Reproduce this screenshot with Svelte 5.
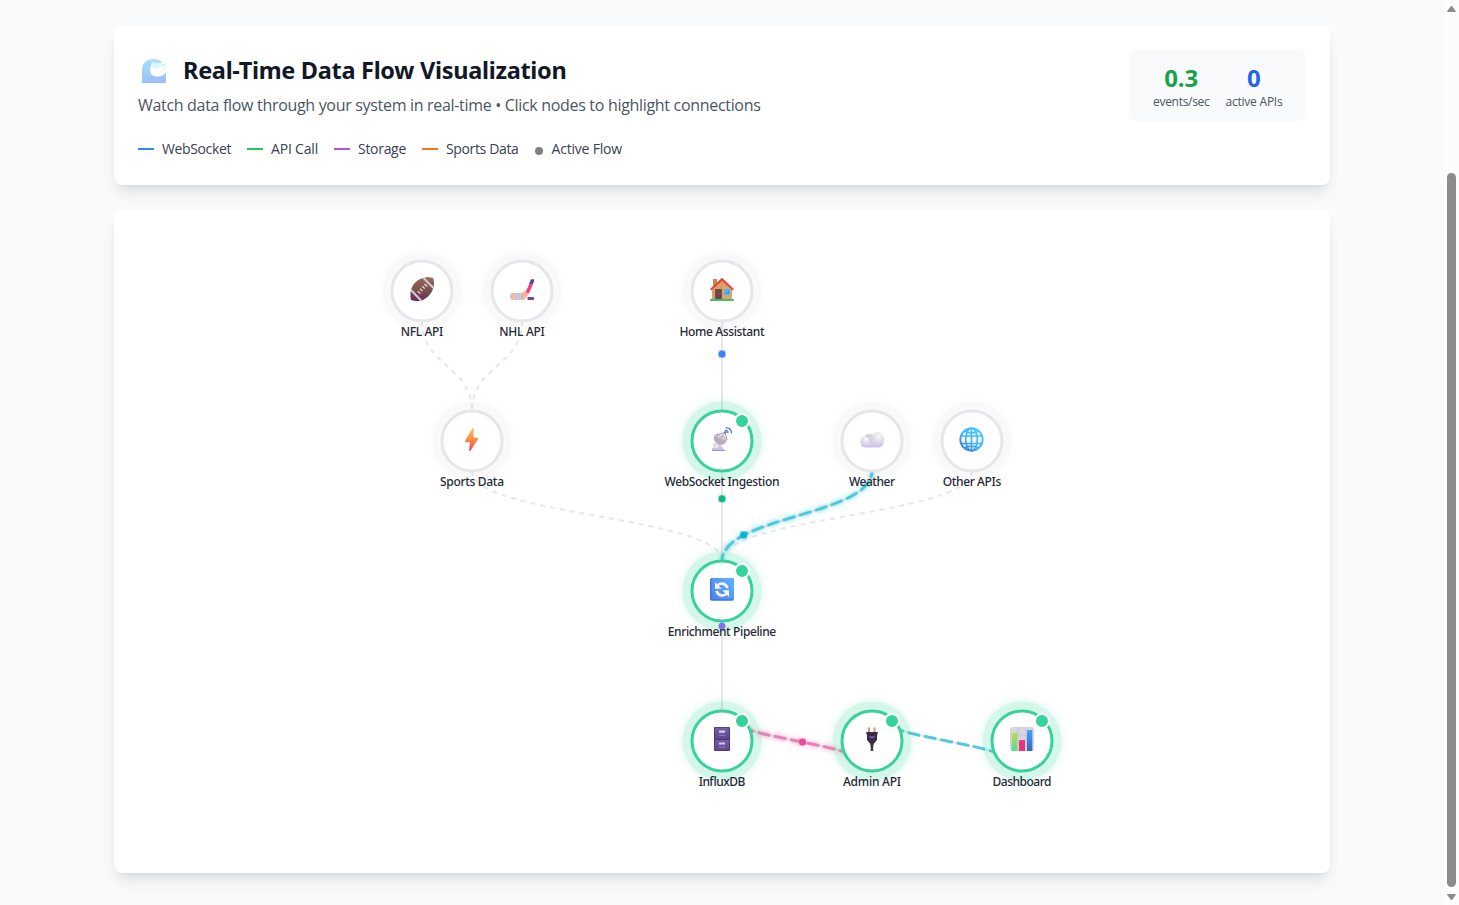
<script>
  const nodes = [
    { id: 'nfl', x: 422, y: 291, label: 'NFL API', w: 42.5 },
    { id: 'nhl', x: 522, y: 291, label: 'NHL API', w: 45.5 },
    { id: 'home', x: 722, y: 291, label: 'Home Assistant', w: 85 },
    { id: 'sports', x: 472, y: 441, label: 'Sports Data', w: 64 },
    { id: 'ws', x: 722, y: 441, label: 'WebSocket Ingestion', w: 115, active: true },
    { id: 'weather', x: 872, y: 441, label: 'Weather', w: 46 },
    { id: 'other', x: 972, y: 441, label: 'Other APIs', w: 58.5 },
    { id: 'enrich', x: 722, y: 591, label: 'Enrichment Pipeline', w: 108.5, active: true },
    { id: 'influx', x: 722, y: 741, label: 'InfluxDB', w: 46.5, active: true },
    { id: 'admin', x: 872, y: 741, label: 'Admin API', w: 58, active: true },
    { id: 'dash', x: 1022, y: 741, label: 'Dashboard', w: 59, active: true }
  ];

  const curve = (x1, y1, x2, y2) => {
    const m = (y1 + y2) / 2;
    return `M${x1} ${y1} C${x1} ${m} ${x2} ${m} ${x2} ${y2}`;
  };

  const edges = [
    { d: curve(722, 321, 722, 411) },
    { d: curve(722, 471, 722, 561) },
    { d: curve(722, 621, 722, 711) },
    { d: curve(422, 321, 472, 411), dashed: true },
    { d: curve(522, 321, 472, 411), dashed: true },
    { d: curve(472, 471, 722, 561), dashed: true },
    { d: curve(972, 471, 722, 561), dashed: true },
    { d: curve(872, 471, 722, 561), flow: '#06b6d4', glow: true },
    { d: curve(722, 711, 872, 771), flow: '#ec4899', glow: true },
    { d: curve(872, 711, 1022, 771), flow: '#06b6d4' }
  ];

  const particles = [
    { x: 722, y: 354, c: '#3b82f6' },
    { x: 722, y: 498.7, c: '#10b981' },
    { x: 743.6, y: 535, c: '#06b6d4' },
    { x: 802.5, y: 742, c: '#ec4899' }
  ];

  const legend = [
    { label: 'WebSocket', c: '#3b82f6', w: 69 },
    { label: 'API Call', c: '#22c55e', w: 47 },
    { label: 'Storage', c: '#a855f7', w: 48 },
    { label: 'Sports Data', c: '#f97316', w: 72.5 }
  ];

  // Tracks the text so that it fills the given width.
  function fit(el, width) {
    const spread = width - el.getBoundingClientRect().width;
    el.style.letterSpacing = spread / el.textContent.length + 'px';
  }
</script>

<div class="page">
  <main>
    <section class="card header">
      <div class="intro">
        <div class="title">
          <svg class="wave" width="24" height="24" viewBox="0 0 24 24">
            <defs>
              <linearGradient id="wv" x1="0" y1="0" x2="0" y2="1"><stop offset="0" stop-color="#4ec3f8" /><stop offset="1" stop-color="#3f7df0" /></linearGradient>
            </defs>
            <path d="M0 24V11C0 4 5 0 11 0c4 0 7 1 9 4l-5 1c-5-1-7 3-7 6 0 4.500 3.500 6.500 7 6.500 4 0 7-1.500 9-4V24z" fill="url(#wv)" />
            <path d="M9 5c1-3 4-2 5-1 2-1 4 0 4 1 2 0 2 2 1 3l-2 0-1 2-2-1-2 1-1-2c-1 0-2-1-2-3z" fill="#bdeafb" />
            <circle cx="21.500" cy="6" r="1.200" fill="#8bd8fa" /><circle cx="22.500" cy="10" r="1" fill="#bdeafb" />
          </svg>
          <h2><span use:fit={383.5}>Real-Time Data Flow Visualization</span></h2>
        </div>
        <p><span use:fit={622.5}>Watch data flow through your system in real-time • Click nodes to highlight connections</span></p>
        <div class="legend">
          {#each legend as l}
            <div class="key"><i style="background:{l.c}"></i><span use:fit={l.w}>{l.label}</span></div>
          {/each}
          <div class="key"><b></b><span use:fit={70.500}>Active Flow</span></div>
        </div>
      </div>
      <div class="stats">
        <div class="stat"><strong class="green"><span use:fit={34}>0.3</span></strong><small><span use:fit={56.5}>events/sec</span></small></div>
        <div class="stat"><strong class="blue"><span use:fit={14}>0</span></strong><small><span use:fit={57}>active APIs</span></small></div>
      </div>
    </section>

    <section class="card canvas">
      <svg width="1168" height="616" viewBox="138 233 1168 616">
        <defs>
          <filter id="glow" x="-50%" y="-50%" width="200%" height="200%" color-interpolation-filters="sRGB"><feGaussianBlur stdDeviation="4" result="b" /><feMerge><feMergeNode in="b" /><feMergeNode in="SourceGraphic" /></feMerge></filter>
          <filter id="lineglow" x="-20%" y="-20%" width="140%" height="140%"><feGaussianBlur stdDeviation="2.5" result="b" /><feMerge><feMergeNode in="b" /><feMergeNode in="SourceGraphic" /></feMerge></filter>
          <linearGradient id="ball" x1="0" y1="0" x2="0" y2="1"><stop offset="0" stop-color="#946b59" /><stop offset=".55" stop-color="#7b5048" /><stop offset="1" stop-color="#642b66" /></linearGradient>
          <linearGradient id="bolt" x1="0" y1="0" x2="0" y2="1"><stop offset="0" stop-color="#ffbd50" /><stop offset=".5" stop-color="#fb8b45" /><stop offset="1" stop-color="#f2435c" /></linearGradient>
          <linearGradient id="cloud" x1="0" y1="0" x2="0" y2="1"><stop offset="0" stop-color="#efedf2" /><stop offset=".5" stop-color="#dedae8" /><stop offset="1" stop-color="#cbbff0" /></linearGradient>
          <radialGradient id="puff" cx=".6" cy=".3" r=".8"><stop offset="0" stop-color="#f7f6f8" /><stop offset=".6" stop-color="#dedbe5" /><stop offset="1" stop-color="#cfc4ec" /></radialGradient>
          <linearGradient id="world" gradientUnits="userSpaceOnUse" x1="20" y1="2" x2="2" y2="22"><stop offset="0" stop-color="#4cc9fb" /><stop offset=".6" stop-color="#43b0f4" /><stop offset="1" stop-color="#377be0" /></linearGradient>
          <linearGradient id="sync" x1="1" y1="0" x2="0" y2="1"><stop offset="0" stop-color="#5eb2ff" /><stop offset="1" stop-color="#4687e8" /></linearGradient>
          <linearGradient id="cab" x1="0" y1="0" x2="0" y2="1"><stop offset="0" stop-color="#7361a8" /><stop offset="1" stop-color="#62458f" /></linearGradient>
          <linearGradient id="gbar" x1="0" y1="0" x2="0" y2="1"><stop offset="0" stop-color="#b5dc53" /><stop offset="1" stop-color="#55e08a" /></linearGradient>
          <linearGradient id="bbar" x1="0" y1="0" x2="0" y2="1"><stop offset="0" stop-color="#35a5f4" /><stop offset="1" stop-color="#3a68bd" /></linearGradient>
          <linearGradient id="wall" x1="0" y1="0" x2="1" y2="1"><stop offset="0" stop-color="#d79a63" /><stop offset="1" stop-color="#e7a570" /></linearGradient>
        </defs>

        {#each edges as e}
          <path class="edge" class:dashed={e.dashed} d={e.d} />
          {#if e.flow}
            <path class="flowline" d={e.d} stroke={e.flow} filter={e.glow ? 'url(#lineglow)' : undefined} />
          {/if}
        {/each}

        {#each particles as p}
          <rect x={p.x - 4} y={p.y - 4} width="8" height="8" fill={p.c} opacity=".22" />
          <circle cx={p.x} cy={p.y} r="3.500" fill={p.c} />
        {/each}

        {#each nodes as n}
          <circle class="halo" class:active={n.active} cx={n.x} cy={n.y} r="39.500" filter="url(#glow)" />
          <circle class="ring" class:active={n.active} cx={n.x} cy={n.y} r="30" />
          <g transform="translate({n.x - 12} {n.y - 14})">
            {#if n.id === 'nfl'}
              <path d="M1 23C-1 14 2 6 10 2c5-2 10-2 13-1 2 4 1 11-2 15-5 7-12 10-20 7z" fill="url(#ball)" />
              <path d="M13.500 1 23.500 11M1 13 11 23.500" stroke="#d4c9dc" stroke-width="2" />
              <path d="m7.800 14.200 2.500 2.500m-.3-5 2.500 2.500m-.3-5 2.500 2.500m-.2-4.700 2.500 2.500" stroke="#eee7ee" stroke-width="1.200" />
            {:else if n.id === 'nhl'}
              <path d="M3 16h8c2 0 3-1 4-3l4 2c-2 6-4 8-7 8H3c-4 0-4-7 0-7z" fill="#ffb29b" />
              <path d="M4 16h8l-1 7H4z" fill="#d5ccdc" /><path d="M6 16v7m3-7v7m3-7.500-.5 7" stroke="#b5adc4" stroke-width=".8" />
              <path d="m19.200 7-3.400 8 3.200 1.600L22.700 8z" fill="#fa3e78" /><path d="M21 2.200h3v2l-1.500 3.800-3.400-1.200z" fill="#653ca0" />
              <rect x="17.500" y="20" width="6.500" height="3" rx=".7" fill="#654da5" />
            {:else if n.id === 'home'}
              <path d="M3 2h4v9H3z" fill="#c98655" /><path d="m12 3 10 9v11H2V12z" fill="url(#wall)" />
              <path d="M0 12 12 .8 24 12l-1.200 1.600L12 4 1.200 13.600z" fill="#e54b37" />
              <path d="M5 12h7v11H5z" fill="#7c4c50" /><path d="M6 13h2v3H6zm3 0h2v3H9zm-3 4h2v5H6zm3 0h2v5H9z" fill="#69414b" />
              <path d="M14 12h6v6h-6z" fill="#45b9fb" /><path d="M15 17 18 13.500h1.500V17z" fill="#36a6f0" />
              <rect y="22" width="24" height="2" rx=".8" fill="#43bf61" />
            {:else if n.id === 'sports'}
              <path d="m12.500 1.200 1.100-.2v9.500l4 .2.500 1.400L10.300 24l-1.200-.2.800-8.600H5.400L5 13.700z" fill="url(#bolt)" />
            {:else if n.id === 'ws'}
              <path d="m3 17 3-1 3 1 4 4H3z" fill="#c8bfda" /><circle cx="6" cy="19" r="3" fill="#e7e0eb" /><path d="M2.300 21h11l.5 3H2z" fill="#cdc0de" /><path d="M2 23h13.500v1H2z" fill="#a493b8" />
              <path d="M4.500 8 17 13c-2 5-6 6-9 4C4 15 3 12 4.500 8z" fill="#b8adbe" /><path d="M5 7.500C8 6 16 9 17.500 12.500 15 14 7 11 5 7.500z" fill="#d5ceda" />
              <path d="m6 8 9-2.500 2 7M11 11l4-5" fill="none" stroke="#857a89" stroke-width=".8" /><circle cx="15.300" cy="5.300" r="1.200" fill="#837789" />
              <path d="M15 3.200c2 0 3 1 3 3M15.500.7c4 0 6 2 6 5.600" fill="none" stroke="#3d76ea" stroke-width="1.200" />
            {:else if n.id === 'weather'}
              <path d="M4 10c2-4 7-4 9-2 4-3 11 0 11 5 0 4-2 7.600-6 7.600H5C0 20.600-1 12 4 10z" fill="url(#cloud)" /><circle cx="9" cy="11" r="4" fill="#d5d1dc" /><circle cx="5" cy="14" r="4.600" fill="url(#puff)" /><circle cx="17.500" cy="11.500" r="6.400" fill="url(#puff)" />
            {:else if n.id === 'other'}
              <circle cx="11.500" cy="12.500" r="11.200" fill="#edf5fb" stroke="url(#world)" stroke-width="1.900" />
              <path d="M1 9h21M1 16.500h21M11.500 1v23M4 4c4 2.500 11 2.500 15 0M4 21c4-2.500 11-2.500 15 0" fill="none" stroke="url(#world)" stroke-width="1.600" />
              <ellipse cx="11.500" cy="12.500" rx="5.800" ry="11.200" fill="none" stroke="url(#world)" stroke-width="1.600" />
            {:else if n.id === 'enrich'}
              <rect y="1" width="24" height="22.700" rx="2" fill="#4471d8" /><rect x="1.300" y="1" width="22.700" height="21.200" rx="2" fill="url(#sync)" />
              <g fill="none" stroke="#f9f1fd" stroke-width="2.600"><path d="M7 9c3-4 9-3 10.500 2.200M17 16c-3 4-9 3-10.500-2.200" /></g>
              <path d="M5 5v6.700h6.700zm14 15v-6.700h-6.700z" fill="#f9f1fd" />
            {:else if n.id === 'influx'}
              <rect x="4" y="0" width="16" height="24" rx="1" fill="#4d3978" /><rect x="5" y=".8" width="14" height="11" rx=".5" fill="url(#cab)" /><rect x="5" y="13" width="14" height="10.300" rx=".5" fill="url(#cab)" />
              <path d="M9 3.500h6v2.300H9zm0 12h6v2H9z" fill="#d8c9ed" /><path d="M9 7.700h6v1H9zm0 12h6v1H9z" fill="#9c78d2" />
            {:else if n.id === 'admin'}
              <path d="M8 .8q1-1 2 0V6H8zm5.500 0q1-1 2 0V6h-2z" fill="#c79a70" /><path d="M6.300 5h11.400v2L17 8v5l-3 3.500h-4L7 13V8l-.7-1z" fill="#352b42" /><path d="M10 16h4l-.8 4v4h-2.500v-4z" fill="#40384a" />
              <path d="M9 9h6v2.500H9z" fill="#59438a" /><path d="M10 10h4" stroke="#8c70c4" stroke-width=".8" />
            {:else}
              <rect width="24" height="24" rx="2.500" fill="#d9d5e0" /><path d="M0 8h24M0 16h24M8 0v24M16 0v24" stroke="#c4bdcf" stroke-width=".9" />
              <path d="M1.700 7l1-1h4.500v18H1.700z" fill="url(#gbar)" /><path d="M9 14l1-1h5v11H9z" fill="#e93579" /><path d="M17 4l1-1h4.300v21H17z" fill="url(#bbar)" />
            {/if}
          </g>
          {#if n.active}<circle class="badge" cx={n.x + 20} cy={n.y - 20} r="7" />{/if}
          {#if n.id === 'enrich'}<circle cx="722" cy="626" r="3.500" fill="#7c5cf0" opacity=".85" />{/if}
          <text x={n.x} y={n.y + 45} textLength={n.w}>{n.label}</text>
        {/each}
      </svg>
    </section>
  </main>

  <div class="scrollbar">
    <svg width="9" height="7" viewBox="0 0 9 7"><path d="M4.500 1 8.500 6.500H.5z" fill="#8b8b8b" stroke="#8b8b8b" stroke-linejoin="round" /></svg>
    <div class="thumb"></div>
    <svg width="9" height="7" viewBox="0 0 9 7"><path d="M4.500 6 8.500.5H.5z" fill="#8b8b8b" stroke="#8b8b8b" stroke-linejoin="round" /></svg>
  </div>
</div>

<style>
  :global(body) { background: #f9fafb; overflow: hidden; }
  .page { display: flex; height: 905px; background: #f9fafb; font-family: "Open Sans", "Noto Sans", sans-serif; color: #111827; }
  main { flex: 1; display: flex; flex-direction: column; gap: 24px; padding: 25px 114px 0; }
  .card { box-sizing: border-box; width: 1216px; padding: 24px; background: #fff; border-radius: 8px; box-shadow: 0 10px 15px -3px rgba(0,0,0,.1), 0 4px 6px -4px rgba(0,0,0,.1); }
  .header { height: 160px; display: flex; justify-content: space-between; align-items: flex-start; }
  .canvas { height: 664px; }
  .canvas svg { display: block; }
  .intro, .title, .legend, .key, .stats { display: flex; }
  .intro { flex-direction: column; }
  span { white-space: nowrap; }
  .title { height: 44px; align-items: center; gap: 17px; padding-left: 4px; }
  .wave { opacity: .5; }
  h2 { margin: 0 0 2px; font-family: "Noto Sans", "Open Sans", sans-serif; font-size: 23.5px; line-height: 32px; font-weight: 700; }
  p { margin: 0; font-size: 16px; line-height: 24px; color: #4b5563; }
  .legend { gap: 16px; margin-top: 22px; font-size: 14px; line-height: 20px; color: #374151; }
  .key { align-items: center; gap: 8px; }
  .key i { width: 16px; height: 2px; }
  .key b { width: 8px; height: 8px; border-radius: 50%; background: #808080; margin: 3px 1px 0 0; }
  .stats { box-sizing: border-box; width: 177px; height: 72px; padding: 13px 24px 11px; gap: 16px; background: #f9fafb; border-radius: 8px; }
  .stat { display: flex; flex-direction: column; align-items: center; }
  strong { font-size: 24px; line-height: 32px; font-weight: 700; }
  small { font-size: 12px; line-height: 16px; color: #4b5563; }
  .green { color: #16a34a; }
  .blue { color: #2563eb; }
  .edge { fill: none; stroke: #e5e7eb; stroke-width: 2; }
  .edge.dashed { stroke-dasharray: 5 5; }
  .flowline { fill: none; stroke-width: 3; stroke-dasharray: 12.6 4; stroke-dashoffset: 5.7; opacity: .65; }
  .halo { fill: #808080; opacity: .04; }
  .halo.active { fill: #34d399; opacity: .2; }
  .ring { fill: #fff; stroke: #e5e7eb; stroke-width: 3; }
  .ring.active { stroke: #34d399; }
  .badge { fill: #34d399; stroke: #fff; stroke-width: 2; }
  text { font-family: "Noto Sans", "Open Sans", sans-serif; font-size: 12px; font-weight: 500; text-anchor: middle; fill: #1f2937; }
  .scrollbar { width: 15px; display: flex; flex-direction: column; align-items: center; background: #fcfcfc; box-sizing: border-box; padding: 5px 0 4px; }
  .thumb { width: 9px; height: 714px; margin: 161px 0 7px; border-radius: 5px; background: #8b8b8b; }
</style>
